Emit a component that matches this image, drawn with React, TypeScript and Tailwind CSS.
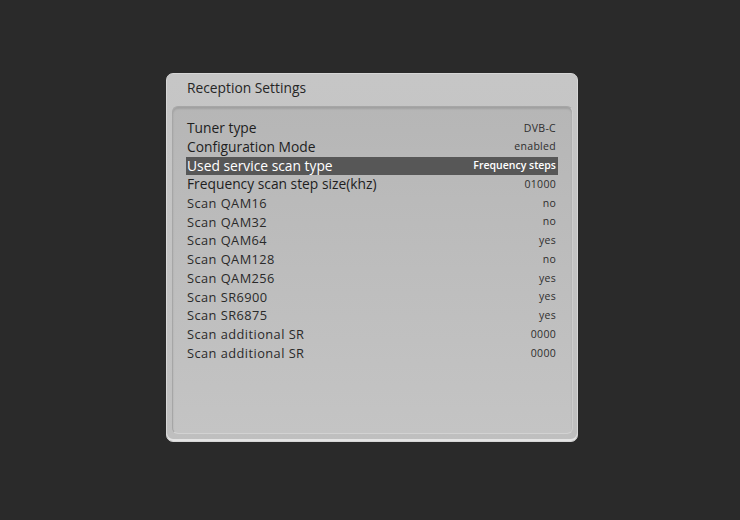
const rows: { label: string; value: string; big?: boolean; active?: boolean }[] = [
  { label: "Tuner type", value: "DVB-C", big: true },
  { label: "Configuration Mode", value: "enabled", big: true },
  { label: "Used service scan type", value: "Frequency steps", big: true, active: true },
  { label: "Frequency scan step size(khz)", value: "01000", big: true },
  { label: "Scan QAM16", value: "no" },
  { label: "Scan QAM32", value: "no" },
  { label: "Scan QAM64", value: "yes" },
  { label: "Scan QAM128", value: "no" },
  { label: "Scan QAM256", value: "yes" },
  { label: "Scan SR6900", value: "yes" },
  { label: "Scan SR6875", value: "yes" },
  { label: "Scan additional SR", value: "0000" },
  { label: "Scan additional SR", value: "0000" },
];

export default function App() {
  return (
    <div
      className="w-[740px] h-[520px] bg-[#2a2a2a] pt-[73px] pl-[166px] overflow-hidden"
      style={{ fontFamily: '"Open Sans", "Noto Sans", sans-serif' }}
    >
      <div className="w-[412px] h-[369px] rounded-[7px] bg-gradient-to-b from-[#c6c6c6] to-[#bfbfbf] border border-[#d6d6d6] shadow-[inset_0_-2px_0_#e4e4e4] flex flex-col">
        <div className="h-[32px] pl-[20px] pb-[4px] flex items-center text-[13.8px] text-[#262626]">
          Reception Settings
        </div>
        <div className="ml-[5px] w-[401px] h-[328px] rounded-[6px] bg-gradient-to-b from-[#b6b6b6] via-[#bdbdbd] to-[#c4c4c4] border border-[#a6a6a6] border-b-[#d2d2d2] border-r-[#cdcdcd] shadow-[inset_0_2px_2px_rgba(0,0,0,0.12)] pt-[12px] pl-[14px] pr-[16px]">
          {rows.map((r, i) => (
            <div
              key={i}
              className={
                r.active
                  ? "h-[18.75px] flex items-center justify-between bg-[#575757] -ml-[1px] -mr-[2px] pl-[1px] pr-[2px]"
                  : "h-[18.75px] flex items-center justify-between"
              }
            >
              <span
                className={
                  r.active
                    ? "text-[13.8px] text-white"
                    : r.big
                      ? "text-[13.8px] text-[#1e1e1e]"
                      : "text-[12.8px] text-[#2a2a2a] tracking-[0.45px]"
                }
              >
                {r.label}
              </span>
              <span
                className={
                  r.active
                    ? "text-[10.5px] text-white font-semibold"
                    : "text-[10.5px] text-[#2e2e2e] tracking-[0.3px]"
                }
              >
                {r.value}
              </span>
            </div>
          ))}
        </div>
      </div>
    </div>
  );
}
